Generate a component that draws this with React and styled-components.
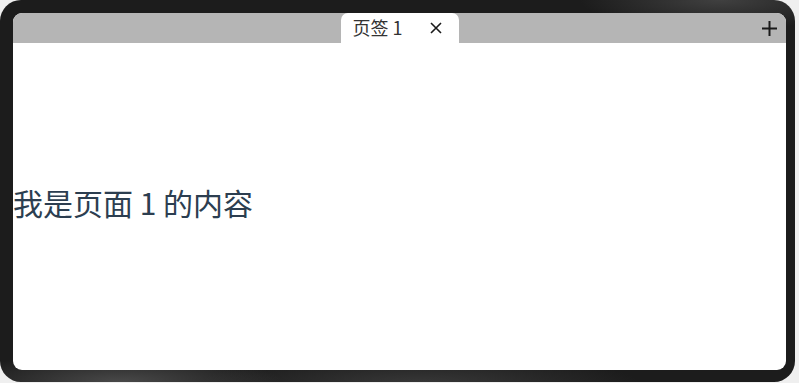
import React from "react";
import styled, { createGlobalStyle } from "styled-components";

const Global = createGlobalStyle`
  html, body { margin: 0; padding: 0; background: #efefef; }
  body { font-family: "Noto Sans", "Noto Sans CJK SC", sans-serif; }
`;

const Frame = styled.div`
  width: 795px;
  height: 382px;
  box-sizing: border-box;
  padding: 13px 9px 12px 13px;
  border-radius: 21px;
  background:
    radial-gradient(ellipse 160px 30px at 120px 382px, rgba(110, 110, 110, 0.55), rgba(110, 110, 110, 0) 100%),
    radial-gradient(ellipse 220px 30px at 420px 384px, rgba(90, 90, 90, 0.45), rgba(90, 90, 90, 0) 100%),
    radial-gradient(ellipse 140px 30px at 720px 0px, rgba(100, 100, 100, 0.5), rgba(100, 100, 100, 0) 100%),
    #1c1c1c;
  display: flex;
`;

const Screen = styled.div`
  flex: 1;
  display: flex;
  flex-direction: column;
  background: #ffffff;
  border-radius: 9px;
  overflow: hidden;
`;

const TabBar = styled.div`
  height: 30px;
  flex: none;
  background: #b5b5b5;
  display: grid;
  grid-template-columns: 1fr auto 1fr;
  align-items: stretch;
`;

const Tab = styled.div`
  grid-column: 2;
  width: 118px;
  box-sizing: border-box;
  padding: 0 17px 0 12px;
  background: #ffffff;
  border-radius: 7px 7px 0 0;
  display: flex;
  align-items: center;
  justify-content: space-between;
  font-family: "Noto Sans CJK SC", sans-serif;
  font-size: 18px;
  color: #333333;
`;

const TabLabel = styled.span`
  line-height: 30px;
  margin-top: -2px;
`;

const IconButton = styled.span`
  display: flex;
  align-items: center;
  justify-content: center;
  color: #1a1a1a;
`;

const AddButton = styled(IconButton)`
  grid-column: 3;
  justify-self: end;
  margin-right: 8px;
`;

const Content = styled.div`
  flex: 1;
  display: flex;
  align-items: center;
  padding-bottom: 9px;
`;

const PageText = styled.div`
  font-family: "Noto Sans CJK SC", sans-serif;
  font-size: 30px;
  color: #2c3e50;
  line-height: 1.2;
`;

const CloseIcon = () => (
  <svg width="12" height="12" viewBox="0 0 12 12">
    <path d="M1 1 L11 11 M11 1 L1 11" stroke="currentColor" strokeWidth="1.6" fill="none" />
  </svg>
);

const PlusIcon = () => (
  <svg width="17" height="17" viewBox="0 0 17 17">
    <path d="M8.5 1 V16 M1 8.5 H16" stroke="currentColor" strokeWidth="2" fill="none" />
  </svg>
);

export default function App() {
  return (
    <>
      <Global />
      <Frame>
        <Screen>
          <TabBar>
            <Tab>
              <TabLabel>页签 1</TabLabel>
              <IconButton>
                <CloseIcon />
              </IconButton>
            </Tab>
            <AddButton>
              <PlusIcon />
            </AddButton>
          </TabBar>
          <Content>
            <PageText>我是页面 1 的内容</PageText>
          </Content>
        </Screen>
      </Frame>
    </>
  );
}
